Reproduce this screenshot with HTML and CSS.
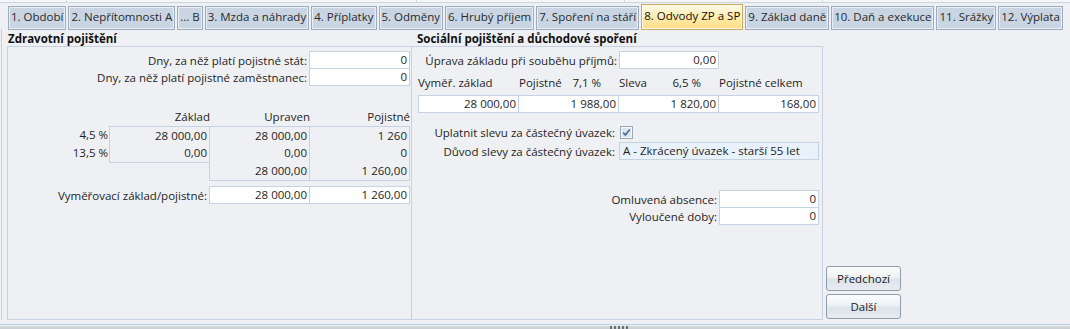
FILE: index.html
```html
<!DOCTYPE html>
<html lang="cs">
<head>
<meta charset="utf-8">
<title>Odvody ZP a SP</title>
<link rel="stylesheet" href="styles.css">
</head>
<body>
<div class="strip">
  <div class="seg s1"></div>
  <div class="seg s2"></div>
  <div class="seg s3"></div>
  <div class="seg s4"></div>
</div>
<div class="tabs">
  <div class="tab">1. Období</div>
  <div class="tab">2. Nepřítomnosti A</div>
  <div class="tab">... B</div>
  <div class="tab">3. Mzda a náhrady</div>
  <div class="tab">4. Příplatky</div>
  <div class="tab">5. Odměny</div>
  <div class="tab">6. Hrubý příjem</div>
  <div class="tab">7. Spoření na stáří</div>
  <div class="tab active">8. Odvody ZP a SP</div>
  <div class="tab">9. Základ daně</div>
  <div class="tab">10. Daň a exekuce</div>
  <div class="tab">11. Srážky</div>
  <div class="tab">12. Výplata</div>
</div>
<div class="main">
  <section class="section left">
    <div class="title">Zdravotní pojištění</div>
    <div class="box lbox">
      <div class="frow">
        <span class="lbl">Dny, za něž platí pojistné stát:</span>
        <span class="inp">0</span>
      </div>
      <div class="frow stack">
        <span class="lbl">Dny, za něž platí pojistné zaměstnanec:</span>
        <span class="inp">0</span>
      </div>
      <div class="table">
        <div class="tcol labels">
          <div class="th"></div>
          <div class="tl">4,5 %</div>
          <div class="tl">13,5 %</div>
        </div>
        <div class="tcol">
          <div class="th">Základ</div>
          <div class="tbox">
            <div class="td">28 000,00</div>
            <div class="td">0,00</div>
          </div>
        </div>
        <div class="tcol">
          <div class="th">Upraven</div>
          <div class="tbox">
            <div class="td">28 000,00</div>
            <div class="td">0,00</div>
            <div class="td">28 000,00</div>
          </div>
        </div>
        <div class="tcol">
          <div class="th">Pojistné</div>
          <div class="tbox">
            <div class="td">1 260</div>
            <div class="td">0</div>
            <div class="td">1 260,00</div>
          </div>
        </div>
      </div>
      <div class="frow vz">
        <span class="lbl">Vyměřovací základ/pojistné:</span>
        <span class="inp">28 000,00</span>
        <span class="inp joined">1 260,00</span>
      </div>
    </div>
  </section>
  <section class="section right">
    <div class="title">Sociální pojištění a důchodové spoření</div>
    <div class="box rbox">
      <div class="grid4">
        <span class="lbl span2">Úprava základu při souběhu příjmů:</span>
        <span class="inp">0,00</span>
      </div>
      <div class="grid4 heads">
        <span class="hd">Vyměř. základ</span>
        <span class="hd split"><span>Pojistné</span><span>7,1 %</span></span>
        <span class="hd split"><span>Sleva</span><span>6,5 %</span></span>
        <span class="hd">Pojistné celkem</span>
      </div>
      <div class="grid4 vals">
        <span class="inp">28 000,00</span>
        <span class="inp joined">1 988,00</span>
        <span class="inp joined">1 820,00</span>
        <span class="inp joined">168,00</span>
      </div>
      <div class="grid4 chkrow">
        <span class="lbl span2 pr">Uplatnit slevu za částečný úvazek:</span>
        <span class="chk">
          <svg width="13" height="13" viewBox="0 0 13 13"><rect x="0.5" y="0.5" width="12" height="12" fill="#f4f6f9" stroke="#9aa8b8"/><rect x="2" y="2" width="9" height="9" fill="#dfe5ee"/><path d="M3.2 6.6 L5.4 9 L9.8 3.4" fill="none" stroke="#4d6a8f" stroke-width="1.6"/></svg>
        </span>
      </div>
      <div class="grid4 duvod">
        <span class="lbl span2 pr">Důvod slevy za částečný úvazek:</span>
        <span class="inp sel span2">A - Zkrácený úvazek - starší 55 let</span>
      </div>
      <div class="grid4 absrow">
        <span class="lbl span3">Omluvená absence:</span>
        <span class="inp">0</span>
      </div>
      <div class="grid4 stack">
        <span class="lbl span3">Vyloučené doby:</span>
        <span class="inp">0</span>
      </div>
    </div>
  </section>
  <aside class="side">
    <button class="btn">Předchozí</button>
    <button class="btn">Další</button>
  </aside>
</div>
<div class="bottomline"></div>
<div class="grip"><span class="dots"></span></div>
</body>
</html>
```
FILE: styles.css
```css
* { box-sizing: border-box; }
html, body { margin: 0; padding: 0; }
body {
  width: 1070px;
  height: 329px;
  overflow: hidden;
  background: #eef0f3;
  font-family: "Open Sans", "Noto Sans", sans-serif;
  font-size: 11.5px;
  color: #1f1f1f;
}
.strip {
  height: 3px;
  display: flex;
  background: #f4f6f8;
  border-bottom: 1px solid #cbd6e2;
}
.seg { border-right: 1px solid #cbd6e2; height: 100%; }
.s1 { width: 67px; }
.s2 { width: 350px; }
.s3 { width: 208px; }
.s4 { width: 198px; }

.tabs {
  display: flex;
  gap: 2px;
  padding-left: 8px;
  height: 26px;
  align-items: flex-end;
}
.tab {
  height: 24px;
  padding: 0 2px;
  line-height: 20px;
  background: #c9d5e3;
  border: 1px solid #9eacbd;
  box-shadow: inset 0 0 0 1px #e6edf5;
  color: #2a2a2a;
  white-space: nowrap;
  margin-bottom: -1px;
}
.tab.active {
  height: 26px;
  line-height: 22px;
  background: linear-gradient(#fffbea, #ffeaa8 55%, #ffdc84);
  border-color: #c9a862;
  box-shadow: inset 0 0 0 1px #fffbe8;
  color: #111;
}

.main {
  display: flex;
  height: 291px;
  padding-left: 5px;
  border-left: 1px solid #c6d2df;
  margin-left: 1px;
}
.section { display: flex; flex-direction: column; }
.left { width: 405px; }
.right { width: 411px; margin-left: 0; }
.title {
  height: 17px;
  line-height: 15px;
  font-weight: bold;
  padding-left: 1px;
  padding-top: 2px;
  color: #111;
}
.right .title { padding-left: 5px; }
.box {
  flex: 1;
  border: 1px solid #c6d2df;
}
.right .box { border-left: none; }

.lbox { padding: 4px 1px 0 0; }
.frow {
  display: flex;
  justify-content: flex-end;
  align-items: center;
  height: 18px;
}
.frow .lbl { margin-right: 2px; }
.stack { margin-top: -1px; }
.inp {
  display: block;
  width: 101px;
  height: 18px;
  line-height: 16px;
  padding: 0 2px;
  text-align: right;
  background: #fff;
  border: 1px solid #c6d2df;
  white-space: nowrap;
}
.joined { margin-left: -1px; }

.table {
  display: flex;
  justify-content: flex-end;
  margin-top: 23px;
}
.tcol { width: 101px; display: flex; flex-direction: column; }
.tcol + .tcol { margin-left: -1px; }
.tcol.labels { width: auto; align-items: flex-end; padding-right: 2px; }
.th { height: 17px; line-height: 15px; text-align: right; padding-right: 0; }
.tl { height: 18px; line-height: 18px; }
.tbox { border: 1px solid #c6d2df; }
.td { height: 18px; line-height: 17px; text-align: right; padding-right: 2px; }
.tbox .td:first-child { height: 17px; line-height: 17px; }
.vz { margin-top: 5px; }
.vz .inp { width: 101px; }

.rbox { padding: 4px 3px 0 6px; }
.grid4 {
  display: grid;
  grid-template-columns: 101px 100px 100px 100px;
  align-items: center;
  height: 18px;
}
.grid4 .inp { width: auto; }
.grid4 .joined { margin-left: -1px; }
.span2 { grid-column: span 2; }
.span3 { grid-column: span 3; }
.grid4 .lbl { text-align: right; padding-right: 2px; white-space: nowrap; }
.grid4 .lbl.pr { padding-right: 4px; }
.heads { margin-top: 5px; height: 16px; }
.hd { white-space: nowrap; }
.split { display: flex; justify-content: space-between; padding-right: 18px; }
.vals { margin-top: 5px; }
.chkrow { margin-top: 12px; height: 14px; }
.chk { display: flex; padding-left: 1px; }
.chk svg { display: block; }
.duvod { margin-top: 3px; }
.inp.sel {
  text-align: left;
  background: #e9f1fa;
  padding-left: 3px;
}
.absrow { margin-top: 30px; }

.side {
  display: flex;
  flex-direction: column;
  justify-content: flex-end;
  gap: 3px;
  padding-left: 3px;
  padding-bottom: 1px;
}
.btn {
  width: 75px;
  height: 25px;
  font-family: inherit;
  font-size: 11.5px;
  color: #1a1a1a;
  border: 1px solid #8f9caa;
  border-radius: 3px;
  background: linear-gradient(#fbfcfd, #eef1f4 45%, #dde3ea 55%, #e7ecf1);
  padding: 0;
}

.bottomline {
  margin-top: 4px;
  height: 2px;
  border-top: 1px solid #c0d1e2;
  background: #e8edf2;
}
.grip {
  height: 3px;
  background: linear-gradient(#d8dce1, #c8cdd3);
  display: flex;
  padding-left: 610px;
}
.dots {
  width: 20px;
  height: 3px;
  background: repeating-linear-gradient(90deg, #6a6f76 0 2px, transparent 2px 4px);
}
```
